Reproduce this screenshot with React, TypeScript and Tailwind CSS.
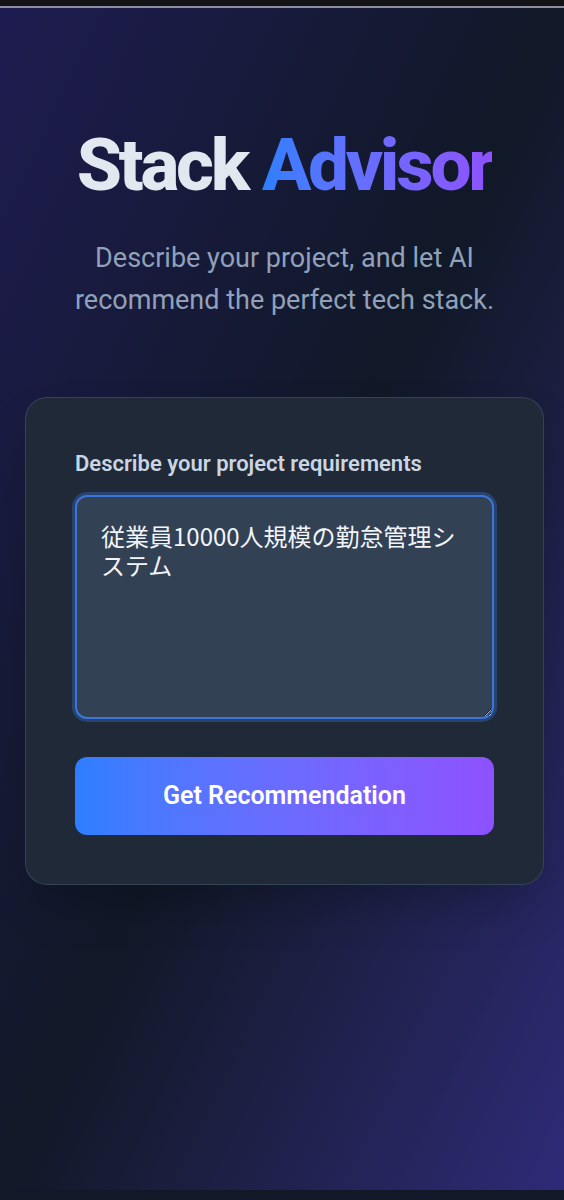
import React, { useState } from 'react';

export default function App() {
  const [text, setText] = useState('従業員10000人規模の勤怠管理システム');

  return (
    <div
      className="min-h-screen h-[1200px] flex flex-col bg-[#111827] text-slate-200"
      style={{ fontFamily: "Roboto, 'Noto Sans CJK JP', sans-serif" }}
    >
      {/* Status strip */}
      <div className="h-[8px] shrink-0 bg-[#131316] border-b-2 border-[#8d8ca3]"></div>

      <main className="flex-1 bg-gradient-to-br from-[#1e1b50] via-[#111827] to-[#2f2a78] flex flex-col items-center pl-[25px] pr-[20px]">
        {/* Header */}
        <h1 className="mt-[113px] text-[73px] leading-[88px] font-extrabold tracking-[-0.045em] text-center">
          <span className="text-slate-200">Stack </span>
          <span className="text-transparent bg-clip-text bg-gradient-to-r from-blue-500 to-violet-500">Advisor</span>
        </h1>
        <p className="mt-[28px] text-[27px] leading-[42px] text-slate-400 text-center">
          Describe your project, and let AI
          <br />
          recommend the perfect tech stack.
        </p>

        {/* Form card */}
        <div className="mt-[76px] w-full rounded-[22px] border border-slate-600/60 bg-[#1f2937] shadow-2xl px-[49px] pt-[51px] pb-[49px]">
          <label className="block text-[22px] leading-[30px] font-semibold text-slate-300 mb-[16px]">
            Describe your project requirements
          </label>
          <textarea
            value={text}
            onChange={(e) => setText(e.target.value)}
            className="block w-full h-[224px] rounded-xl border-2 border-[#3d74d8] bg-[#334155] px-[24px] py-[24px] text-[24px] leading-[29px] text-slate-100 outline-none shadow-[0_0_0_3px_rgba(59,130,246,0.3)]"
            style={{ fontFamily: "'Noto Sans CJK JP', Roboto, sans-serif" }}
          />
          <button className="mt-[38px] w-full h-[78px] rounded-xl bg-gradient-to-r from-blue-500 to-violet-500 text-white text-[25px] font-semibold">
            Get Recommendation
          </button>
        </div>
      </main>

      {/* Bottom strip */}
      <div className="h-[10px] shrink-0 bg-[#111827]"></div>
    </div>
  );
}
